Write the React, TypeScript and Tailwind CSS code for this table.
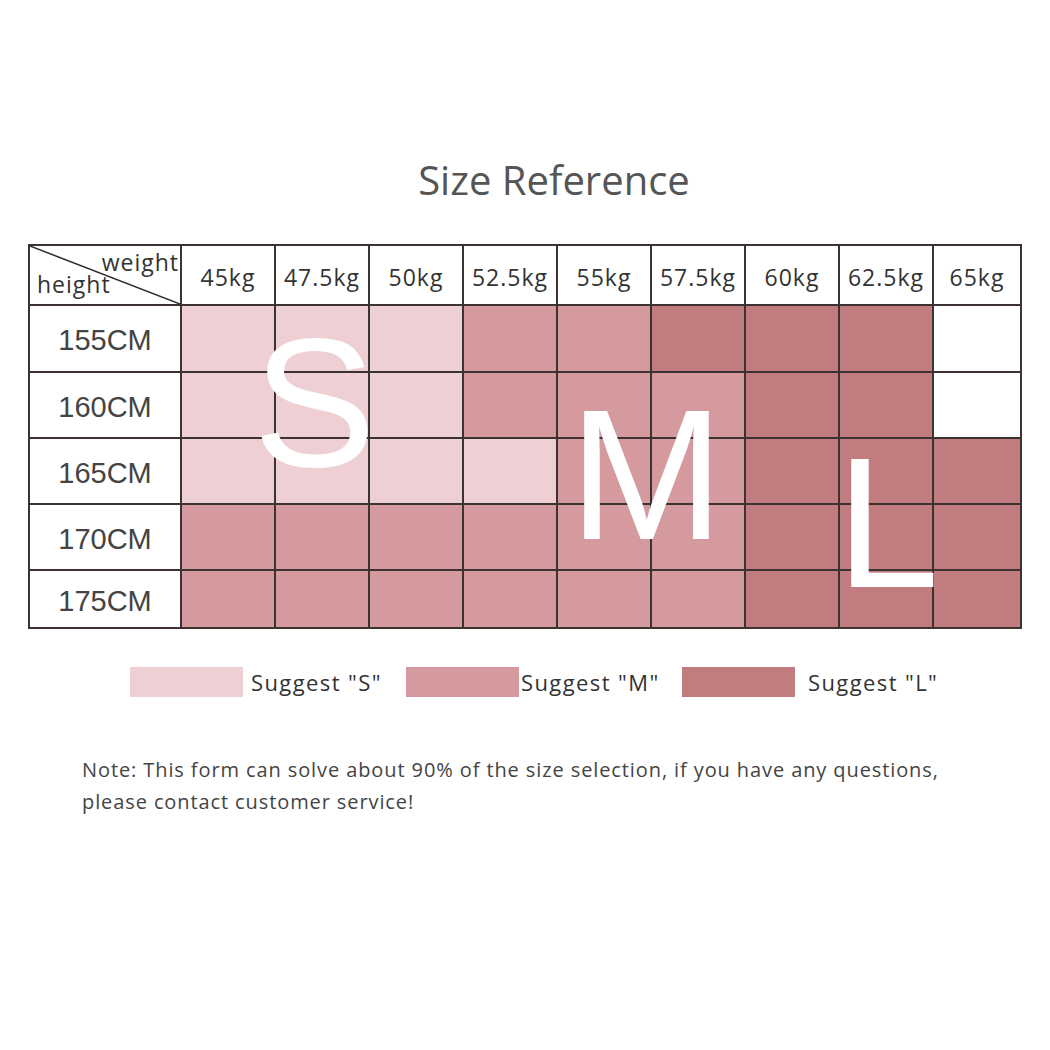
const S = 'bg-[#eed0d4]';
const M = 'bg-[#d49a9d]';
const L = 'bg-[#c07c7e]';
const W = 'bg-white';

const weights = ['45kg', '47.5kg', '50kg', '52.5kg', '55kg', '57.5kg', '60kg', '62.5kg', '65kg'];

const rows: { label: string; cells: string[] }[] = [
  { label: '155CM', cells: [S, S, S, M, M, L, L, L, W] },
  { label: '160CM', cells: [S, S, S, M, M, M, L, L, W] },
  { label: '165CM', cells: [S, S, S, S, M, M, L, L, L] },
  { label: '170CM', cells: [M, M, M, M, M, M, L, L, L] },
  { label: '175CM', cells: [M, M, M, M, M, M, L, L, L] },
];

const legend = [
  { color: S, text: 'Suggest "S"', gap: 'ml-[8px]' },
  { color: M, text: 'Suggest "M"', gap: 'ml-[2px]' },
  { color: L, text: 'Suggest "L"', gap: 'ml-[13px]' },
];

export default function App() {
  return (
    <div className="w-[1050px] h-[1050px] bg-white font-['Open_Sans',sans-serif]">
      <div className="pt-[160px] pl-[58px] text-center">
        <h1 className="text-[40px] leading-[40px] text-[#555]">Size Reference</h1>
      </div>

      {/* size chart */}
      <div className="mt-[44px] ml-[28px] w-fit relative border-2 border-[#3c3232] bg-[#3c3232] grid grid-cols-[150px_repeat(8,92px)_86px] grid-rows-[58px_65px_64px_64px_64px_56px] gap-[2px]">
        <div className="relative bg-white text-[23px] leading-none text-[#333] tracking-[1px]">
          <svg className="absolute inset-0 w-full h-full" viewBox="0 0 150 58" preserveAspectRatio="none">
            <line x1="0" y1="0" x2="150" y2="58" stroke="#2f2828" strokeWidth="1.5" />
          </svg>
          <span className="absolute right-[1px] top-[5px]">weight</span>
          <span className="absolute left-[7px] top-[27px]">height</span>
        </div>
        {weights.map(w => (
          <div key={w} className="bg-white flex items-center justify-center pt-[5px] text-[23px] text-[#333] tracking-[1px]">
            {w}
          </div>
        ))}
        {rows.map(r => (
          <>
            <div key={r.label} className="bg-white flex items-center justify-center pt-[5px] font-['Liberation_Sans',sans-serif] text-[29px] text-[#444]">
              {r.label}
            </div>
            {r.cells.map((c, i) => (
              <div key={r.label + i} className={c} />
            ))}
          </>
        ))}

        <span className="absolute left-[223px] top-[64px] font-['Liberation_Sans',sans-serif] text-[184px] leading-none text-white">S</span>
        <span className="absolute left-[539px] top-[136px] font-['Liberation_Sans',sans-serif] text-[186px] leading-none text-white">M</span>
        <span className="absolute left-[806px] top-[184px] font-['Liberation_Sans',sans-serif] text-[186px] leading-none text-white">L</span>
      </div>

      {/* legend */}
      <div className="mt-[38px] ml-[130px] flex">
        {legend.map(l => (
          <div key={l.text} className="w-[276px] flex items-center">
            <div className={`w-[113px] h-[30px] ${l.color}`} />
            <span className={`${l.gap} text-[22px] leading-none text-[#333] tracking-[1.4px]`}>{l.text}</span>
          </div>
        ))}
      </div>

      <p className="mt-[57px] ml-[82px] text-[20px] leading-[32px] text-[#444] tracking-[0.9px] whitespace-nowrap">
        Note: This form can solve about 90% of the size selection, if you have any questions,
        <br />
        please contact customer service!
      </p>
    </div>
  );
}
